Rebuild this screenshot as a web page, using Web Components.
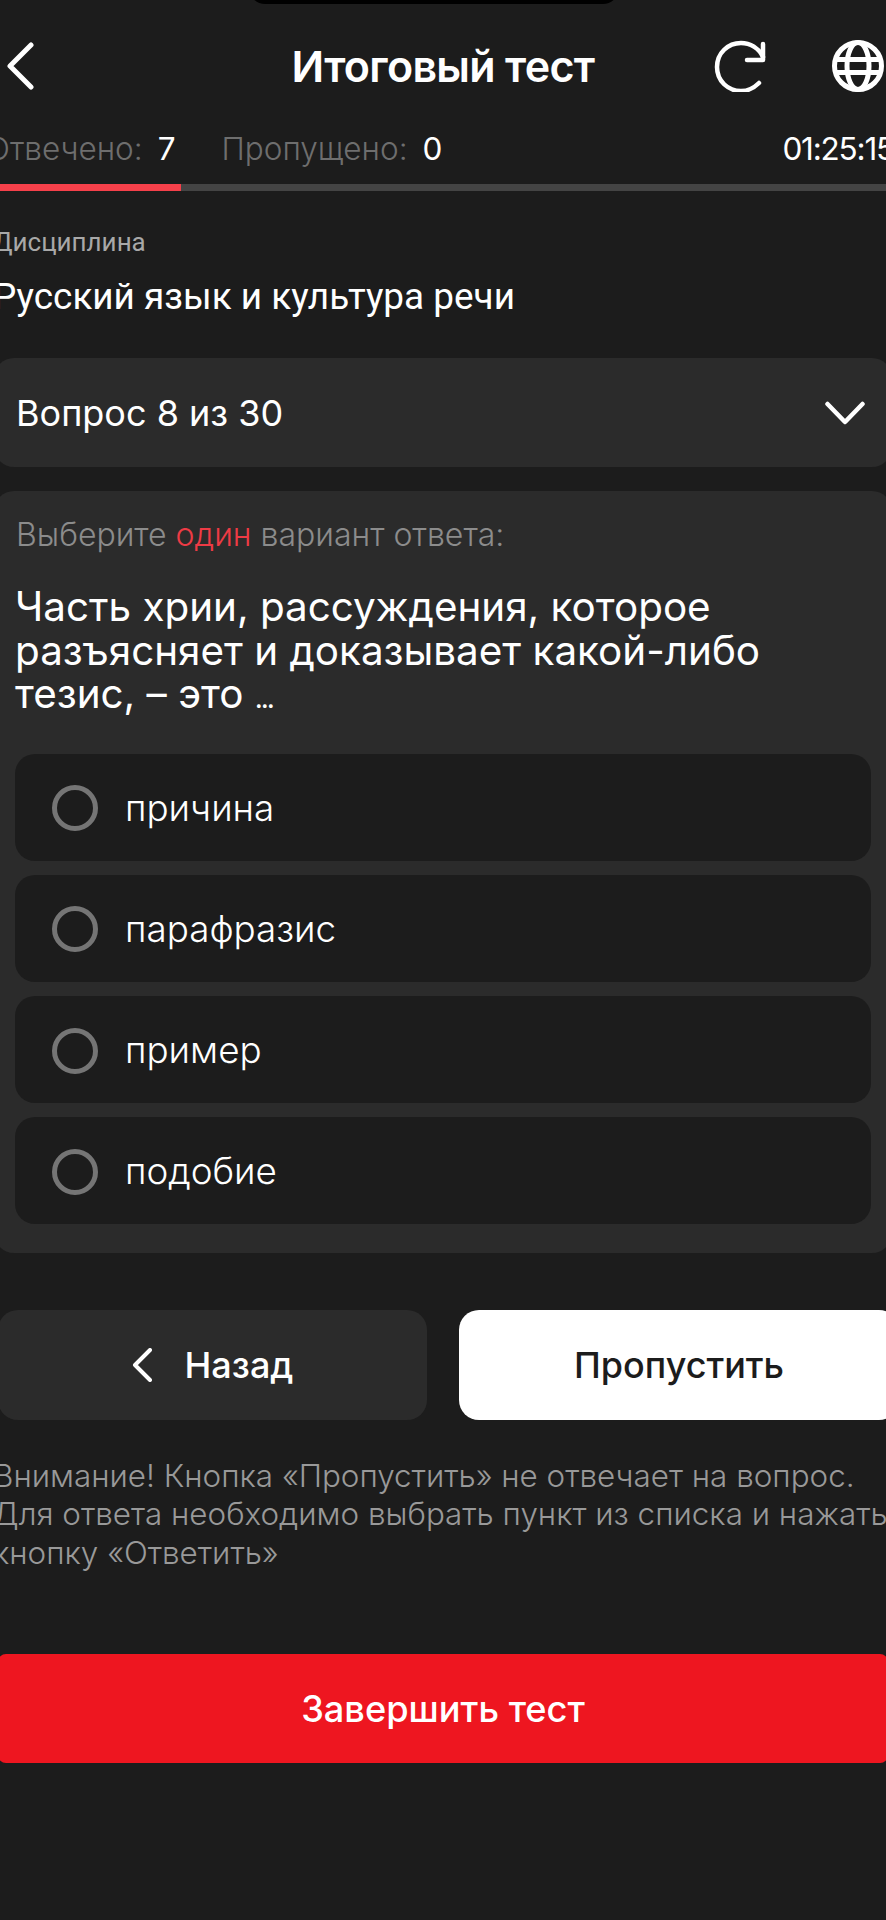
<!DOCTYPE html>
<html lang="ru">
<head>
<meta charset="utf-8">
<title>Итоговый тест</title>
<style>
  html, body { margin: 0; background: #1c1c1c; }
  body { width: 886px; height: 1920px; overflow: hidden; position: relative; color: #fff; font-family: "Inter", "Noto Sans", sans-serif; }
  .notch { position: absolute; left: 249px; top: -20px; width: 370px; height: 24px; background: #000; border-radius: 0 0 16px 16px; }
  em { font-style: normal; color: #ee3b45; }
  .dots { font-size: 28px; line-height: 0; letter-spacing: -2px; }
</style>
</head>
<body>
<div class="notch"></div>
<test-header>Итоговый тест</test-header>
<test-stats answered="7" skipped="0" time="01:25:15"></test-stats>
<test-progress value="20.4"></test-progress>
<test-subject label="Дисциплина">Русский язык и культура речи</test-subject>
<question-select>Вопрос 8 из 30</question-select>
<question-card>
  <span slot="hint">Выберите <em>один</em> вариант ответа:</span>
  <span slot="text">Часть хрии, рассуждения, которое<br>разъясняет и доказывает какой-либо<br>тезис, – это <span class="dots">...</span></span>
  <answer-option>причина</answer-option>
  <answer-option>парафразис</answer-option>
  <answer-option>пример</answer-option>
  <answer-option>подобие</answer-option>
</question-card>
<test-nav></test-nav>
<test-notice>Внимание! Кнопка «Пропустить» не отвечает на вопрос.<br>Для ответа необходимо выбрать пункт из списка и нажать<br>кнопку «Ответить»</test-notice>
<finish-button>Завершить тест</finish-button>

<script>
function define(name, html, init) {
  customElements.define(name, class extends HTMLElement {
    connectedCallback() {
      if (this.shadowRoot) return;
      this.attachShadow({ mode: 'open' });
      this.shadowRoot.innerHTML = html;
      if (init) init(this, this.shadowRoot);
    }
  });
}

define('test-header', `
  <style>
    :host { display: grid; grid-template-columns: 1fr auto 1fr; align-items: center; height: 132px; }
    h1 { margin: 0; font: 600 43px "Inter", sans-serif; letter-spacing: -0.7px; }
    .left { padding-left: 5px; display: flex; }
    .right { display: flex; justify-content: flex-end; align-items: center; gap: 64px; padding-right: 1px; }
    svg { display: block; fill: none; stroke: #fff; stroke-linecap: round; stroke-linejoin: round; }
  </style>
  <div class="left">
    <svg width="30" height="48" viewBox="0 0 30 48" stroke-width="5"><path d="M26 3 5 24l21 21"/></svg>
  </div>
  <h1><slot></slot></h1>
  <div class="right">
    <svg width="54" height="52" viewBox="0 0 54 52" stroke-width="4.5"><path d="M50 17C46 8 37 3 28 3 15 3 4 13 4 27s11 24 24 24c7 0 13-3 18-8"/><path d="M50 4v16H34"/></svg>
    <svg width="54" height="54" viewBox="0 0 54 54" stroke-width="5"><circle cx="27" cy="27" r="23.5"/><ellipse cx="27" cy="27" rx="11" ry="23.5"/><path d="M6 20.500h42M6 33.500h42" stroke-linecap="butt"/></svg>
  </div>
`);

define('test-stats', `
  <style>
    :host { display: flex; align-items: center; height: 32px; padding-bottom: 4px; font: 300 31.500px "Inter", sans-serif; margin: 0 -8px 0 -14px; white-space: nowrap; }
    .l { color: #6e6e6e; }
    .v { color: #fff; font-weight: 400; margin-left: 15px; }
    .s { margin-left: 46px; }
    .t { margin-left: auto; font-weight: 400; color: #fff; letter-spacing: -1.200px; }
  </style>
  <span class="l" id="a"></span><span class="v" id="av"></span>
  <span class="l s" id="b"></span><span class="v" id="bv"></span>
  <span class="t" id="t"></span>
`, (el, r) => {
  r.getElementById('a').textContent = 'Отвечено:';
  r.getElementById('av').textContent = el.getAttribute('answered');
  r.getElementById('b').textContent = 'Пропущено:';
  r.getElementById('bv').textContent = el.getAttribute('skipped');
  r.getElementById('t').textContent = el.getAttribute('time');
});

define('test-progress', `
  <style>
    :host { display: block; height: 7px; margin-top: 15.500px; background: #444; }
    div { height: 100%; background: #f5404a; }
  </style>
  <div></div>
`, (el, r) => { r.querySelector('div').style.width = el.getAttribute('value') + '%'; });

define('test-subject', `
  <style>
    :host { display: block; margin-left: -7px; font-family: "Roboto", sans-serif; }
    .label { margin-top: 36px; font-size: 26px; line-height: 30px; color: #a8a8a8; }
    .name { margin-top: 18.500px; font-size: 36.900px; line-height: 44px; color: #fff; }
  </style>
  <div class="label"></div>
  <div class="name"><slot></slot></div>
`, (el, r) => { r.querySelector('.label').textContent = el.getAttribute('label'); });

define('question-select', `
  <style>
    :host { display: flex; align-items: center; justify-content: space-between; height: 109px; margin: 39px -6px 0; padding: 0 27px 0 22px; background: #2b2b2b; border-radius: 20px; font: 400 36px "Inter", sans-serif; }
    svg { display: block; fill: none; stroke: #fff; stroke-width: 4.500; stroke-linecap: round; stroke-linejoin: round; }
  </style>
  <span><slot></slot></span>
  <svg width="40" height="24" viewBox="0 0 40 24"><path d="M2.500 3 20 21 37.500 3"/></svg>
`);

define('question-card', `
  <style>
    :host { display: block; margin: 24px -6px 0; padding: 26px 21px 28.700px; background: #2b2b2b; border-radius: 20px; }
    .hint { margin-left: 1px; font: 300 32px/36px "Inter", sans-serif; color: #8c8c8c; }
    ::slotted(span[slot=hint]) { display: block; }
    .text { margin: 32px 0 38.500px 0; font: 400 40.400px/43.500px "Inter", sans-serif; color: #fff; }
    .list { display: flex; flex-direction: column; gap: 14.670px; }
  </style>
  <div class="hint"><slot name="hint"></slot></div>
  <div class="text"><slot name="text"></slot></div>
  <div class="list"><slot></slot></div>
`);

define('answer-option', `
  <style>
    :host { display: flex; align-items: center; height: 106.500px; padding-left: 37px; background: #1c1c1c; border-radius: 20px; font: 300 36.800px "Inter", sans-serif; color: #fff; }
    i { width: 36px; height: 36px; border: 5px solid #757575; border-radius: 50%; margin: 2px 27px 0 0; flex: none; }
  </style>
  <i></i><span><slot></slot></span>
`);

define('test-nav', `
  <style>
    :host { display: grid; grid-template-columns: 429px 440px; column-gap: 32px; height: 110px; margin: 57.300px 0 0 -2px; font: 500 36px "Inter", sans-serif; }
    button { display: flex; align-items: center; justify-content: center; border: 0; padding: 0; border-radius: 20px; font: inherit; }
    .back { background: #2b2b2b; color: #fff; gap: 33px; }
    .skip { background: #fff; color: #1c1c1c; }
    svg { display: block; fill: none; stroke: #fff; stroke-width: 4; stroke-linecap: round; stroke-linejoin: round; }
  </style>
  <button class="back"><svg width="20" height="34" viewBox="0 0 20 34"><path d="M18 2 3 17l15 15"/></svg><span>Назад</span></button>
  <button class="skip">Пропустить</button>
`);

define('test-notice', `
  <style>
    :host { display: block; margin: 37px 0 0 -7px; font: 300 31.400px/38.500px "Inter", sans-serif; color: #999; white-space: nowrap; }
  </style>
  <slot></slot>
`);

define('finish-button', `
  <style>
    :host { display: flex; align-items: center; justify-content: center; height: 109.400px; margin: 81.500px -2px 0; background: #ee1620; border-radius: 8px; font: 500 36.200px "Inter", sans-serif; color: #fff; }
  </style>
  <slot></slot>
`);
</script>
</body>
</html>
